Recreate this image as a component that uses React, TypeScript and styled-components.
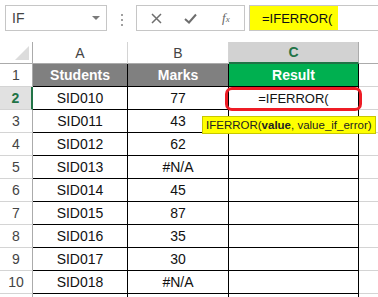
import React from 'react';
import styled, { createGlobalStyle } from 'styled-components';

const GlobalStyle = createGlobalStyle`
  html, body {
    margin: 0;
    padding: 0;
    background: #ffffff;
  }
  body {
    font-family: 'Liberation Sans', Arial, sans-serif;
    width: 378px;
    height: 297px;
    overflow: hidden;
  }
`;

const Page = styled.div`
  position: relative;
  width: 378px;
  height: 297px;
  overflow: hidden;
  background: #ffffff;
`;

const Toolbar = styled.div`
  display: flex;
  align-items: flex-start;
  height: 42px;
  padding: 5px 0 0 5px;
  box-sizing: border-box;
`;

const NameBox = styled.div`
  display: flex;
  align-items: center;
  justify-content: space-between;
  width: 102px;
  height: 26px;
  box-sizing: border-box;
  border: 1px solid #c6c6c6;
  padding: 0 6px 0 6px;
  font-size: 14px;
  color: #444444;
`;

const DropArrow = styled.span`
  width: 0;
  height: 0;
  border-left: 4px solid transparent;
  border-right: 4px solid transparent;
  border-top: 4px solid #7a7a7a;
`;

const Dots = styled.div`
  display: flex;
  flex-direction: column;
  gap: 3px;
  margin: 9px 13px 0 14px;
  span {
    width: 2px;
    height: 2px;
    background: #a0a0a0;
  }
`;

const ButtonGroup = styled.div`
  display: flex;
  align-items: center;
  width: 109px;
  height: 26px;
  box-sizing: border-box;
  border: 1px solid #c6c6c6;
  padding: 0 0 0 14px;
  gap: 22px;
`;

const Fx = styled.span`
  font-family: 'Liberation Serif', serif;
  font-style: italic;
  font-size: 13px;
  color: #666666;
  margin-left: 3px;
  sub {
    font-size: 9px;
    vertical-align: baseline;
  }
`;

const FormulaBar = styled.div`
  flex: 1;
  margin-left: 4px;
  height: 26px;
  box-sizing: border-box;
  border: 1px solid #c6c6c6;
  border-right: none;
  display: flex;
`;

const FormulaText = styled.div`
  background: #ffff00;
  width: 88px;
  display: flex;
  align-items: center;
  padding-left: 12px;
  box-sizing: border-box;
  font-size: 13px;
  color: #111111;
`;

const Grid = styled.div`
  display: grid;
  grid-template-columns: 33px 95px 101px 130px 1fr;
  grid-template-rows: 22px;
  grid-auto-rows: 23px;
`;

const Corner = styled.div`
  position: relative;
  background: #ffffff;
  border-right: 1px solid #ababab;
  border-bottom: 1px solid #ababab;
  &::after {
    content: '';
    position: absolute;
    right: 3px;
    bottom: 3px;
    border-left: 14px solid transparent;
    border-bottom: 14px solid #dcdcdc;
  }
`;

const ColHead = styled.div<{ $active?: boolean }>`
  display: flex;
  align-items: center;
  justify-content: center;
  font-size: 14px;
  background: ${p => (p.$active ? '#d2d2d2' : '#ffffff')};
  color: ${p => (p.$active ? '#217346' : '#444444')};
  font-weight: ${p => (p.$active ? 700 : 400)};
  border-right: 1px solid ${p => (p.$active ? '#ababab' : '#d4d4d4')};
  border-bottom: ${p => (p.$active ? '2px solid #217346' : '1px solid #ababab')};
`;

const EmptyHead = styled.div`
  border-bottom: 1px solid #ababab;
`;

const RowHead = styled.div<{ $active?: boolean }>`
  display: flex;
  align-items: center;
  justify-content: center;
  font-size: 14px;
  background: ${p => (p.$active ? '#e1e1e1' : '#ffffff')};
  color: ${p => (p.$active ? '#217346' : '#444444')};
  font-weight: ${p => (p.$active ? 700 : 400)};
  border-bottom: 1px solid #d4d4d4;
  border-right: ${p => (p.$active ? '2px solid #217346' : '1px solid #ababab')};
`;

const Cell = styled.div<{ $head?: 'gray' | 'green'; $small?: boolean }>`
  display: flex;
  align-items: center;
  justify-content: center;
  font-size: ${p => (p.$small ? '13px' : '14px')};
  color: ${p => (p.$head ? '#ffffff' : '#111111')};
  font-weight: ${p => (p.$head ? 700 : 400)};
  background: ${p => (p.$head === 'gray' ? '#808080' : p.$head === 'green' ? '#00b050' : '#ffffff')};
  border-right: 1px solid #000000;
  border-bottom: 1px solid #000000;
`;

const Spare = styled.div`
  border-bottom: 1px solid #d4d4d4;
`;

const Highlight = styled.div`
  position: absolute;
  left: 225px;
  top: 87px;
  width: 137px;
  height: 24px;
  box-sizing: border-box;
  border: 3px solid #ee1c25;
  border-radius: 7px;
`;

const Tooltip = styled.div`
  position: absolute;
  left: 202px;
  top: 116px;
  height: 18px;
  box-sizing: border-box;
  padding: 0 3px;
  display: flex;
  align-items: center;
  background: #ffff00;
  border: 1px solid #c8c800;
  font-size: 11.5px;
  color: #222222;
  white-space: nowrap;
  b {
    font-weight: 700;
  }
`;

const rows: [string, string][] = [
  ['SID010', '77'],
  ['SID011', '43'],
  ['SID012', '62'],
  ['SID013', '#N/A'],
  ['SID014', '45'],
  ['SID015', '87'],
  ['SID016', '35'],
  ['SID017', '30'],
  ['SID018', '#N/A'],
];

const App: React.FC = () => {
  return (
    <Page>
      <GlobalStyle />
      <Toolbar>
        <NameBox>
          IF
          <DropArrow />
        </NameBox>
        <Dots>
          <span />
          <span />
          <span />
        </Dots>
        <ButtonGroup>
          <svg width="11" height="11" viewBox="0 0 11 11">
            <path d="M1 1L10 10M10 1L1 10" stroke="#6e6e6e" strokeWidth="1.5" fill="none" />
          </svg>
          <svg width="13" height="11" viewBox="0 0 13 11">
            <path d="M1 6L5 9.5L12 1.5" stroke="#6e6e6e" strokeWidth="2" fill="none" />
          </svg>
          <Fx>
            f<sub>x</sub>
          </Fx>
        </ButtonGroup>
        <FormulaBar>
          <FormulaText>=IFERROR(</FormulaText>
        </FormulaBar>
      </Toolbar>
      <Grid>
        <Corner />
        <ColHead>A</ColHead>
        <ColHead>B</ColHead>
        <ColHead $active>C</ColHead>
        <EmptyHead />

        <RowHead>1</RowHead>
        <Cell $head="gray">Students</Cell>
        <Cell $head="gray">Marks</Cell>
        <Cell $head="green">Result</Cell>
        <Spare />

        {rows.map(([id, mark], i) => (
          <React.Fragment key={id}>
            <RowHead $active={i === 0}>{i + 2}</RowHead>
            <Cell>{id}</Cell>
            <Cell>{mark}</Cell>
            <Cell $small>{i === 0 ? '=IFERROR(' : ''}</Cell>
            <Spare />
          </React.Fragment>
        ))}

        <RowHead />
        <Cell />
        <Cell />
        <Cell />
        <Spare />
      </Grid>
      <Highlight />
      <Tooltip>
        IFERROR(<b>value</b>, value_if_error)
      </Tooltip>
    </Page>
  );
};

export default App;
